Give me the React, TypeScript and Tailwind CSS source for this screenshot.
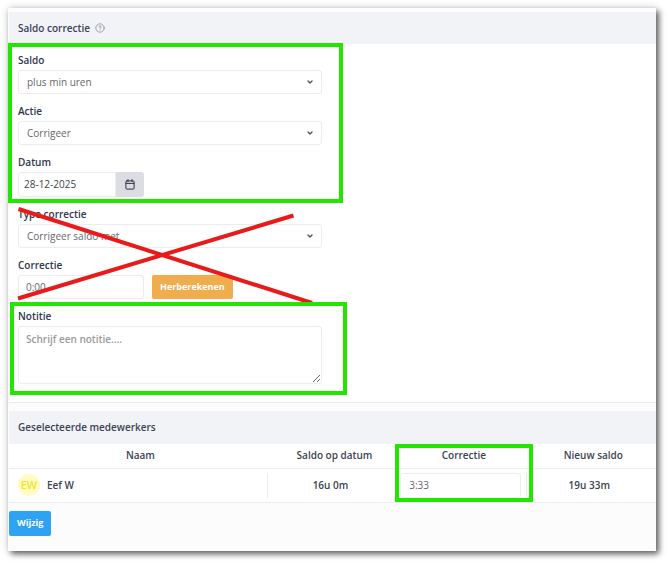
import { ChevronDown, CircleHelp } from "lucide-react"

interface Employee {
  id: number
  initials: string
  name: string
  balance: string
  correction: string
  newBalance: string
}

interface SelectFieldProps {
  id: string
  label: string
  value: string
}

const employees: Employee[] = [
  {
    id: 1,
    initials: "EW",
    name: "Eef W",
    balance: "16u 0m",
    correction: "3:33",
    newBalance: "19u 33m",
  },
]

const SelectField: React.FC<SelectFieldProps> = ({ id, label, value }) => {
  return (
    <div>
      <label
        htmlFor={id}
        className="block mb-0.5 leading-4 font-semibold text-[#2e374b]"
      >
        {label}
      </label>
      <div className="relative">
        <select
          id={id}
          defaultValue={value}
          className="block w-full h-6 appearance-none rounded-[3px] border border-[#ececf0] bg-white pl-2 pr-6 text-[#66686c]"
        >
          <option value={value}>{value}</option>
        </select>
        <ChevronDown
          className="pointer-events-none absolute right-2 top-2 size-2 text-[#4a5063]"
          strokeWidth={4}
        />
      </div>
    </div>
  )
}

const CalendarIcon: React.FC = () => (
  <svg
    viewBox="0 0 10 11"
    className="h-[11px] w-2.5"
    fill="none"
    stroke="#2e3344"
    strokeLinecap="round"
  >
    <rect x="0.9" y="1.9" width="8.2" height="8.2" rx="1" />
    <path d="M1 4.400 H9 M3 0.600 V2.500 M7 0.600 V2.500" />
  </svg>
)

// green marker around a group, the parent has to be relative
const Highlight: React.FC<{ className: string }> = ({ className }) => (
  <div
    className={`pointer-events-none absolute z-10 border-4 border-[#23e600] ${className}`}
  />
)

const App: React.FC = () => {
  return (
    <div className="px-2 pt-2 pr-3.5 pb-3.5 bg-white font-['Open_Sans','Noto_Sans',sans-serif] text-[10px] text-[#3c4254]">
      <main className="bg-[#fcfcfc] pt-1 pl-px pb-[15px] shadow-[3px_3px_6px_rgba(0,0,0,0.6),0_0_8px_rgba(0,0,0,0.15)]">
        <section className="border-b border-[#ececf0] bg-white">
          <h2 className="flex h-8 items-center gap-[5px] bg-[#f2f3f7] px-[9px] font-semibold">
            Saldo correctie
            <CircleHelp className="size-2.5 text-[#8b909c]" />
          </h2>
          <form className="flex flex-col gap-[9px] px-2 pt-2 pb-[18px]">
            <div className="relative flex w-[305px] flex-col gap-[9px] pl-px">
              <Highlight className="-top-[9px] -left-[9px] -right-[21px] -bottom-1.5" />
              <SelectField id="saldo" label="Saldo" value="plus min uren" />
              <SelectField id="actie" label="Actie" value="Corrigeer" />
              <div>
                <label
                  htmlFor="datum"
                  className="block mb-0.5 leading-4 font-semibold text-[#2e374b]"
                >
                  Datum
                </label>
                <div className="flex h-[25px]">
                  <input
                    id="datum"
                    type="text"
                    defaultValue="28-12-2025"
                    className="w-[98px] rounded-l-[3px] border border-[#ececf0] bg-white px-[5px] text-[#404247]"
                  />
                  <button
                    type="button"
                    aria-label="Kalender"
                    className="flex w-7 items-center justify-center rounded-r-[3px] bg-[#dcdde2]"
                  >
                    <CalendarIcon />
                  </button>
                </div>
              </div>
            </div>
            <div className="relative flex w-[305px] flex-col gap-[9px] pl-px">
              <SelectField
                id="type"
                label="Type correctie"
                value="Corrigeer saldo met"
              />
              <div>
                <label
                  htmlFor="correctie"
                  className="block mb-0.5 leading-4 font-semibold text-[#2e374b]"
                >
                  Correctie
                </label>
                <div className="flex h-6 gap-2">
                  <input
                    id="correctie"
                    type="text"
                    defaultValue="0:00"
                    className="w-[126px] rounded-[3px] border border-[#ececf0] bg-white px-[7px] text-[#66686c]"
                  />
                  <button
                    type="button"
                    className="rounded-xs bg-[#f0ad4e] px-2 text-[9px] font-bold text-white"
                  >
                    Herberekenen
                  </button>
                </div>
              </div>
              <svg
                viewBox="0 0 305 100"
                className="pointer-events-none absolute left-0 top-0 h-[100px] w-[305px] overflow-visible"
                stroke="#e81a1a"
                strokeWidth="4"
              >
                <path d="M1.5 3 L295 97" />
                <path d="M1 92.500 L276.500 9.500" />
              </svg>
            </div>
            <div className="relative w-[305px] pl-px">
              <Highlight className="-top-1.5 -left-[7px] -right-[25px] -bottom-[11px]" />
              <label
                htmlFor="notitie"
                className="block mb-0.5 leading-4 font-semibold text-[#2e374b]"
              >
                Notitie
              </label>
              <textarea
                id="notitie"
                placeholder="Schrijf een notitie...."
                className="block h-[58px] w-full rounded-[3px] border border-[#ececf0] bg-white px-[7px] py-1 font-semibold leading-4 placeholder:text-[#999]"
              />
            </div>
          </form>
        </section>

        <section className="mt-2 bg-white">
          <h2 className="flex h-[33px] items-center bg-[#f2f3f7] px-[9px] font-semibold">
            Geselecteerde medewerkers
          </h2>
          <table className="w-full table-fixed border-collapse">
            <thead>
              <tr className="h-6 border-b border-[#ececf0]">
                <th className="w-2/5 pl-1 font-semibold">Naam</th>
                <th className="w-1/5 pl-1 font-semibold">Saldo op datum</th>
                <th className="relative w-1/5 pl-1 font-semibold">
                  <Highlight className="top-0 -left-0.5 -right-1.5 h-[58px]" />
                  Correctie
                </th>
                <th className="w-1/5 pl-1 font-semibold">Nieuw saldo</th>
              </tr>
            </thead>
            <tbody>
              {employees.map(employee => (
                <tr
                  key={employee.id}
                  className="border-b border-[#ececf0] font-semibold"
                >
                  <td className="py-1">
                    <div className="flex h-[25px] items-center gap-[7px] border-r border-[#ececf0] pl-[9px]">
                      <span className="flex size-[22px] items-center justify-center rounded-full bg-[#fffbc2] text-[11px] text-[#f5e51f]">
                        {employee.initials}
                      </span>
                      {employee.name}
                    </div>
                  </td>
                  <td className="pr-1 text-center">{employee.balance}</td>
                  <td className="py-1">
                    <div className="h-[25px] border-r border-[#ececf0] pl-[3px] pr-[5px]">
                      <input
                        type="text"
                        aria-label={`Correctie ${employee.name}`}
                        defaultValue={employee.correction}
                        className="h-full w-full rounded-[3px] border border-[#ececf0] bg-white px-2 font-normal text-[#66686c]"
                      />
                    </div>
                  </td>
                  <td className="pr-1 text-center">{employee.newBalance}</td>
                </tr>
              ))}
            </tbody>
          </table>
        </section>

        <button
          type="button"
          className="mt-2 h-[25px] rounded-xs bg-[#2ea3f2] px-2 text-[9px] font-bold text-white"
        >
          Wijzig
        </button>
      </main>
    </div>
  )
}

export default App
